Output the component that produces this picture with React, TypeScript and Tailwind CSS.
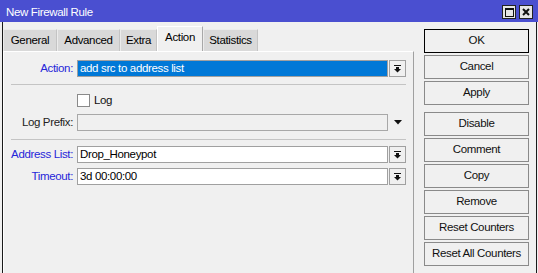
import React from 'react'

const tabs = [
  { name: 'General', w: 'w-[54px]' },
  { name: 'Advanced', w: 'w-[63px]' },
  { name: 'Extra', w: 'w-[37px]' },
  { name: 'Action', w: 'w-[46px]', active: true },
  { name: 'Statistics', w: 'w-[55px]' },
]

function DropBtn() {
  return (
    <div className="ml-px w-[17px] h-[17px] border border-[#a0a0a0] bg-[#f0f0f0] flex items-center justify-center">
      <svg width="7" height="8" viewBox="0 0 7 8">
        <rect x="0" y="0" width="7" height="1" fill="#111" />
        <rect x="2" y="2" width="3" height="2" fill="#111" />
        <path d="M0 4H7L3.5 7.5Z" fill="#111" />
      </svg>
    </div>
  )
}

function Label({ text, blue }: { text: string; blue?: boolean }) {
  return (
    <div className={`w-[69px] mr-[4px] text-right whitespace-nowrap ${blue ? 'text-[#2626d9]' : 'text-[#222]'}`}>
      {text}
    </div>
  )
}

function Btn({ label, def }: { label: string; def?: boolean }) {
  return (
    <div
      className={`w-[105px] h-[24px] flex items-center justify-center whitespace-nowrap bg-[#f0f0f0] border ${
        def ? 'border-black' : 'border-[#8a8a8a]'
      } text-[#111]`}
    >
      {label}
    </div>
  )
}

export default function App() {
  return (
    <div className="w-[538px] h-[273px] bg-[#f0f0f0] flex flex-col overflow-hidden text-[11.5px] tracking-[-0.35px] leading-none font-['Liberation_Sans',Arial,sans-serif]">
      {/* title bar */}
      <div className="h-[22px] bg-[#4a4fd0] flex items-center pl-[6px] pr-[5px] text-white">
        <span className="pt-[3px]">New Firewall Rule</span>
        <div className="ml-auto flex gap-[3px] self-start mt-[5px]">
          <div className="w-[14px] h-[14px] bg-[#e6e6e6] border border-[#222] flex items-center justify-center">
            <div className="w-[9px] h-[9px] border border-[#111] border-t-2" />
          </div>
          <div className="w-[14px] h-[14px] bg-[#e6e6e6] border border-[#222] flex items-center justify-center">
            <svg width="8" height="8" viewBox="0 0 8 8">
              <path d="M1 1L7 7M7 1L1 7" stroke="#111" strokeWidth="2" />
            </svg>
          </div>
        </div>
      </div>

      <div className="flex-1 flex pl-[2px] pr-px">
        <div className="flex-1 flex border-x border-[#1a1a1a]">
          {/* left: tabs + panel */}
          <div className="w-[411px] flex flex-col">
            <div className="h-[27px] mt-[2px] flex items-end">
              {tabs.map((t) =>
                t.active ? (
                  <div
                    key={t.name}
                    className={`${t.w} h-[25px] bg-[#f0f0f0] border-l border-t border-white border-r border-r-[#a8a8a8] flex items-center justify-center pb-[3px] text-black`}
                  >
                    {t.name}
                  </div>
                ) : (
                  <div
                    key={t.name}
                    className={`${t.w} h-[22px] bg-[#d9d9d9] border-l border-t border-[#ececec] border-r border-r-[#c4c4c4] flex items-center justify-center text-black`}
                  >
                    {t.name}
                  </div>
                )
              )}
            </div>
            <div className="flex-1 border-t border-l border-white border-r border-r-[#a0a0a0] flex flex-col">
              <div className="flex items-center mt-[8px] h-[17px]">
                <Label text="Action:" blue />
                <div className="w-[311px] h-[17px] border border-[#a0a0a0] bg-[#0078d7] text-white flex items-center pl-[2px]">
                  add src to address list
                </div>
                <DropBtn />
              </div>
              <div className="ml-[7px] w-[395px] h-px bg-[#c4c4c4] mt-[7px]" />
              <div className="flex items-center mt-[9px] h-[13px] pl-[73px]">
                <div className="w-[13px] h-[13px] bg-white border border-[#8a8a8a]" />
                <span className="ml-[4px] text-[#111]">Log</span>
              </div>
              <div className="flex items-center mt-[7px] h-[17px]">
                <Label text="Log Prefix:" />
                <div className="w-[311px] h-[17px] border border-[#a8a8a8] bg-[#f0f0f0]" />
                <div className="ml-px w-[17px] h-[17px] flex items-center justify-center">
                  <svg width="8" height="5" viewBox="0 0 8 5">
                    <path d="M0 0H8L4 4.5Z" fill="#111" />
                  </svg>
                </div>
              </div>
              <div className="ml-[7px] w-[395px] h-px bg-[#c4c4c4] mt-[8px]" />
              <div className="flex items-center mt-[6px] h-[17px]">
                <Label text="Address List:" blue />
                <div className="w-[311px] h-[17px] border border-[#a0a0a0] bg-white text-black flex items-center pl-[2px]">
                  Drop_Honeypot
                </div>
                <DropBtn />
              </div>
              <div className="flex items-center mt-[5px] h-[17px]">
                <Label text="Timeout:" blue />
                <div className="w-[311px] h-[17px] border border-[#a0a0a0] bg-white text-black flex items-center pl-[2px]">
                  3d 00:00:00
                </div>
                <DropBtn />
              </div>
            </div>
          </div>

          {/* right: buttons */}
          <div className="flex-1 flex flex-col pl-[10px] pt-[7px]">
            <div className="flex flex-col gap-[2px]">
              <Btn label="OK" def />
              <Btn label="Cancel" />
              <Btn label="Apply" />
            </div>
            <div className="flex flex-col gap-[2px] mt-[7px]">
              <Btn label="Disable" />
              <Btn label="Comment" />
              <Btn label="Copy" />
              <Btn label="Remove" />
              <Btn label="Reset Counters" />
              <Btn label="Reset All Counters" />
            </div>
          </div>
        </div>
      </div>
    </div>
  )
}
